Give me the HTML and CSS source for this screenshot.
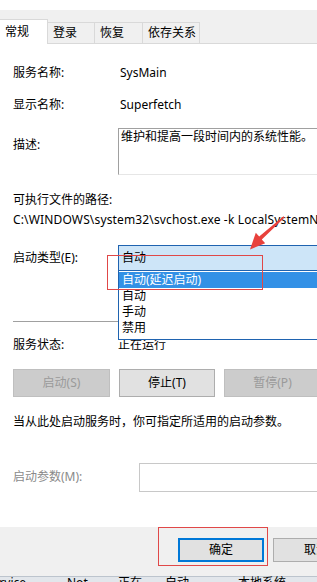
FILE: index.html
```html
<!DOCTYPE html>
<html lang="zh-CN">
<head>
<meta charset="utf-8">
<title>Superfetch 的属性</title>
<link rel="stylesheet" href="styles.css">
</head>
<body>
<div class="page">
  <div class="titlebar"></div>
  <div class="tabs">
    <div class="tab active">常规</div>
    <div class="tab t2">登录</div>
    <div class="tab t3">恢复</div>
    <div class="tab t4">依存关系</div>
  </div>
  <div class="panel">
    <div class="row r-name"><span class="label">服务名称:</span><span class="value">SysMain</span></div>
    <div class="row r-display"><span class="label">显示名称:</span><span class="value">Superfetch</span></div>
    <div class="row r-desc"><span class="label label-desc">描述:</span><div class="desc-box">维护和提高一段时间内的系统性能。</div></div>
    <div class="line r-pathlabel">可执行文件的路径:</div>
    <div class="line r-path">C:\WINDOWS\system32\svchost.exe -k LocalSystemNetworkRestricted -p</div>
    <div class="row r-type">
      <span class="label label-type">启动类型(E):</span>
      <div class="combo">
        <div class="combo-value">自动</div>
        <ul class="combo-list">
          <li class="selected">自动(延迟启动)</li>
          <li>自动</li>
          <li>手动</li>
          <li>禁用</li>
        </ul>
      </div>
    </div>
    <div class="separator"></div>
    <div class="row r-status"><span class="label">服务状态:</span><span>正在运行</span></div>
    <div class="buttons">
      <button class="btn disabled">启动(S)</button>
      <button class="btn narrow">停止(T)</button>
      <button class="btn disabled">暂停(P)</button>
      <button class="btn">恢复(R)</button>
    </div>
    <div class="line r-hint">当从此处启动服务时，你可指定所适用的启动参数。</div>
    <div class="row r-param"><span class="label label-param">启动参数(M):</span><div class="param-input"></div></div>
  </div>
  <div class="footer">
    <button class="fbtn primary">确定</button>
    <button class="fbtn">取消</button>
    <button class="fbtn">应用(A)</button>
  </div>
  <div class="listing">
    <span class="col c1"><span class="shift">Service</span></span>
    <span class="col c2">Not</span>
    <span class="col c3">正在</span>
    <span class="col c4">自动</span>
    <span class="col c5">本地系统</span>
  </div>
  <svg class="arrow" viewBox="0 0 45 45" width="45" height="45">
    <polygon points="38.5,6.2 14.2,26.5 10.8,22.8 5,39.5 20.2,33.2 16.8,29.5 39.6,7.6" fill="#e8413c"/>
  </svg>
  <div class="mark mark-type"></div>
  <div class="mark mark-ok"></div>
</div>
</body>
</html>
```

FILE: styles.css
```css
html, body {
  margin: 0;
  padding: 0;
}

body {
  font-family: "Noto Sans", "Noto Sans CJK SC", sans-serif;
  font-size: 12px;
  line-height: 16px;
  color: #000;
  background: #fff;
}

.page {
  position: relative;
  width: 317px;
  height: 582px;
  overflow: hidden;
}

.titlebar {
  height: 10px;
  background: #fff;
}

/* tabs */
.tabs {
  display: flex;
  align-items: flex-end;
  height: 34px;
  box-sizing: border-box;
  background: #f0f0f0;
  border-bottom: 1px solid #d9d9d9;
}

.tab {
  flex: none;
  box-sizing: border-box;
  height: 21px;
  padding: 2px 0 0 5px;
  border-top: 1px solid #d9d9d9;
  border-right: 1px solid #d9d9d9;
  background: #f0f0f0;
  white-space: nowrap;
}

.tab.active {
  width: 48px;
  height: 25px;
  margin-bottom: -1px;
  padding-top: 4px;
  background: #fff;
  position: relative;
  z-index: 1;
}

.tab.t2 { width: 47px; }
.tab.t3 { width: 48px; }
.tab.t4 { width: 57px; }

/* panel */
.panel {
  box-sizing: border-box;
  height: 483px;
  padding: 21px 0 0 13px;
  background: #fff;
}

.row {
  display: flex;
  align-items: flex-start;
  white-space: nowrap;
}

.line {
  white-space: nowrap;
}

.label {
  flex: none;
  width: 105px;
}

.value {
  padding-left: 2px;
}

.r-display { margin-top: 16px; }
.r-desc { margin-top: 15px; }
.label-desc { padding-top: 9px; }

.desc-box {
  flex: none;
  width: 230px;
  height: 47px;
  box-sizing: border-box;
  border: 1px solid #a0a0a0;
  border-bottom-color: #e6e6e6;
  padding: 0 0 0 2px;
}

.r-pathlabel { margin-top: 17px; }
.r-path {
  margin-top: 4px;
  letter-spacing: 0.15px;
}

.r-type { margin-top: 17px; }
.label-type { padding-top: 5px; }

.combo {
  position: relative;
  flex: none;
  width: 220px;
  height: 26px;
  box-sizing: border-box;
  border: 1px solid #1f63b0;
  background: #cde5f8;
  padding: 4px 0 0 3px;
}

.combo-list {
  position: absolute;
  left: -1px;
  right: -1px;
  top: 25px;
  margin: 0;
  padding: 1px 0 3px;
  list-style: none;
  background: #fff;
  border: 1px solid #1f63b0;
  border-top: none;
  z-index: 5;
}

.combo-list li {
  height: 16px;
  padding-left: 3px;
}

.combo-list li.selected {
  background: #3391e6;
  color: #fff;
}

.separator {
  margin-top: 50px;
  height: 1px;
  background: #a0a0a0;
}

.r-status { margin-top: 15px; }

.buttons {
  display: flex;
  gap: 9px;
  margin-top: 16px;
}

.btn {
  flex: none;
  box-sizing: border-box;
  width: 97px;
  height: 28px;
  padding: 0;
  font: inherit;
  line-height: 26px;
  text-align: center;
  color: #000;
  background: #e1e1e1;
  border: 1px solid #adadad;
}

.btn.narrow { width: 96px; }

.btn.disabled {
  background: #cccccc;
  border-color: #bfbfbf;
  color: #9a9a9a;
}

.r-hint { margin-top: 17px; }

.r-param { margin-top: 33px; }

.label-param {
  width: 126px;
  padding-top: 6px;
  color: #8a8a8a;
}

.param-input {
  flex: none;
  width: 200px;
  height: 29px;
  box-sizing: border-box;
  border: 1px solid #c8c8c8;
  background: #fff;
}

/* footer */
.footer {
  display: flex;
  gap: 9px;
  box-sizing: border-box;
  height: 49px;
  padding: 11px 0 0 178px;
  background: #f0f0f0;
}

.fbtn {
  flex: none;
  box-sizing: border-box;
  width: 86px;
  height: 24px;
  padding: 0;
  font: inherit;
  line-height: 22px;
  text-align: center;
  color: #000;
  background: #e1e1e1;
  border: 1px solid #adadad;
}

.fbtn.primary {
  border: 2px solid #0078d7;
  line-height: 20px;
}

/* background list strip */
.listing {
  display: flex;
  height: 20px;
  box-sizing: border-box;
  background: #e2e6eb;
  border-top: 1px solid #bcc4cd;
  line-height: 12px;
  white-space: nowrap;
}

.col { flex: none; }
.c1 { width: 67px; }
.c2 { width: 51px; }
.c3 { width: 47px; }
.c4 { width: 73px; }
.c5 { width: 80px; }
.shift { margin-left: -14px; }

/* annotations */
.arrow {
  position: absolute;
  left: 245px;
  top: 210px;
  z-index: 6;
}

.mark {
  position: absolute;
  box-sizing: border-box;
  border: 1px solid #e04848;
  z-index: 7;
}

.mark-type {
  left: 107px;
  top: 255px;
  width: 156px;
  height: 35px;
}

.mark-ok {
  left: 158px;
  top: 527px;
  width: 110px;
  height: 39px;
}
```
